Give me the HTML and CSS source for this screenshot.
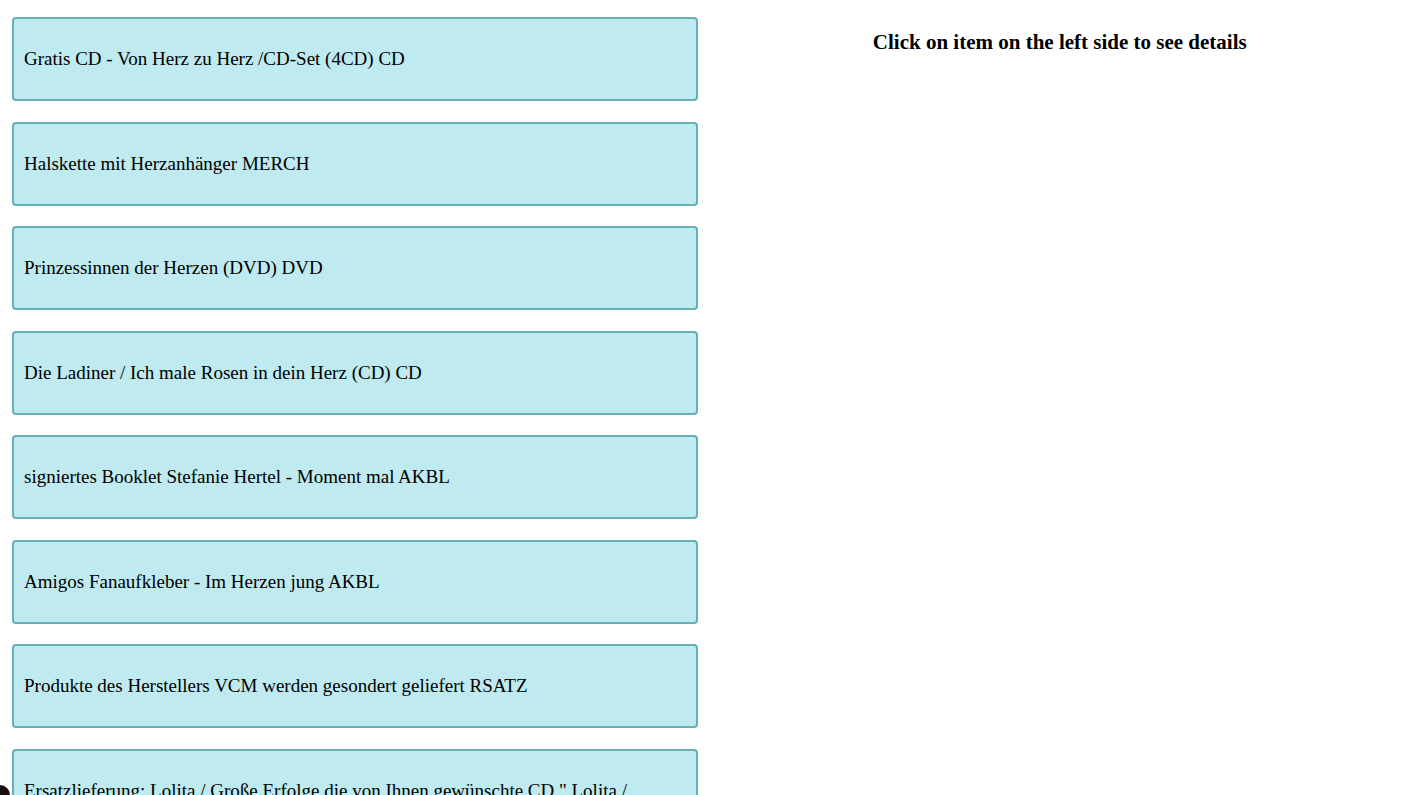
FILE: index.html
```html
<!DOCTYPE html>
<html>
<head>
<meta charset="utf-8">
<link rel="stylesheet" href="styles.css">
</head>
<body>
<div class="layout">
  <div class="list">
    <div class="item">Gratis CD - Von Herz zu Herz /CD-Set (4CD) CD</div>
    <div class="item">Halskette mit Herzanhänger MERCH</div>
    <div class="item">Prinzessinnen der Herzen (DVD) DVD</div>
    <div class="item">Die Ladiner / Ich male Rosen in dein Herz (CD) CD</div>
    <div class="item">signiertes Booklet Stefanie Hertel - Moment mal AKBL</div>
    <div class="item">Amigos Fanaufkleber - Im Herzen jung AKBL</div>
    <div class="item">Produkte des Herstellers VCM werden gesondert geliefert RSATZ</div>
    <div class="item">Ersatzlieferung: Lolita / Große Erfolge die von Ihnen gewünschte CD " Lolita / Weltstar " ist leider nicht mehr lieferbar ERSATZ</div>
  </div>
  <div class="details">
    <h2 class="details-title">Click on item on the left side to see details</h2>
  </div>
</div>
<div class="corner"></div>
</body>
</html>
```
FILE: styles.css
```css
html, body {
  background: #ffffff;
}
body {
  margin: 8px;
  font-family: "Liberation Serif", "Times New Roman", serif;
  color: #000;
}
.layout {
  display: grid;
  grid-template-columns: 1fr 1fr;
}
.list {
  display: flex;
  flex-direction: column;
  gap: 20.5px;
  padding: 9px 13px 0 4px;
}
.item {
  background: #bfeaef;
  border: 2px solid #66b0b8;
  border-radius: 4px;
  padding: 29px 10px 28.5px;
  font-size: 19px;
  line-height: 22.5px;
}
.details {
  text-align: center;
  padding-right: 4px;
}
.details-title {
  font-size: 21px;
  font-weight: bold;
  margin: 22px 0;
}
.corner {
  position: fixed;
  left: -10px;
  bottom: -10px;
  width: 20px;
  height: 20px;
  border-radius: 50%;
  background: #1a0f0f;
}
```
